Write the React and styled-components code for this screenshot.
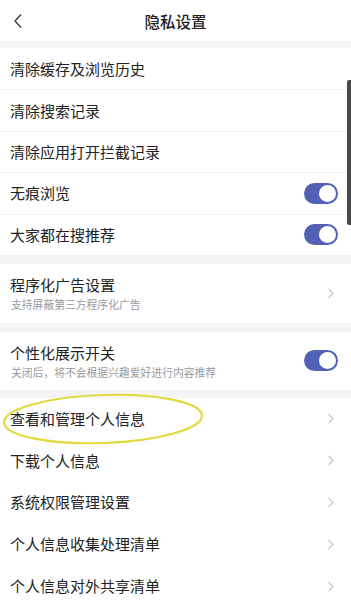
import React from "react";
import styled, { createGlobalStyle } from "styled-components";

const GlobalStyle = createGlobalStyle`
	html, body {
		margin: 0;
		padding: 0;
		background: #f4f4f6;
		font-family: "Noto Sans CJK SC", "Noto Sans", sans-serif;
	}
`;

const Page = styled.div`
	position: relative;
	width: 351px;
	height: 600px;
	overflow: hidden;
	background: #f4f4f6;
`;

const Header = styled.div`
	height: 41px;
	display: flex;
	align-items: center;
	justify-content: center;
	position: relative;
	background: #fff;
	margin-bottom: 7px;
`;

const Back = styled.div`
	position: absolute;
	left: 12px;
	top: 13px;
	width: 12px;
	height: 16px;
	display: flex;
`;

const Title = styled.div`
	font-size: 15.5px;
	font-weight: 500;
	color: #222;
`;

const Group = styled.div`
	background: #fff;
	margin-bottom: ${(p) => p.gap || 9}px;
`;

const Row = styled.div`
	height: ${(p) => p.h || 41.4}px;
	display: flex;
	align-items: center;
	padding: 0 12px 0 10px;
	border-top: ${(p) => (p.line ? "1px solid #f0f0f2" : "none")};
	box-sizing: border-box;
`;

const Texts = styled.div`
	flex: 1;
	display: flex;
	flex-direction: column;
	gap: 2px;
`;

const Label = styled.div`
	font-size: 15px;
	color: #222;
	line-height: 20px;
`;

const Sub = styled.div`
	font-size: 10.8px;
	color: #9a9a9e;
	line-height: 14px;
	padding-left: 1px;
`;

const Switch = styled.div`
	width: 34px;
	height: 21px;
	border-radius: 11px;
	background: #5261b5;
	position: relative;
	margin-right: 1px;
	&::after {
		content: "";
		position: absolute;
		right: 2px;
		top: 2px;
		width: 17px;
		height: 17px;
		border-radius: 50%;
		background: #fff;
	}
`;

const Chevron = () => (
	<svg width="8" height="11" viewBox="0 0 8 11" style={{ marginRight: 4 }}>
		<path d="M1.5 1 L6 5.5 L1.5 10" fill="none" stroke="#c4c4c8" strokeWidth="1.1" />
	</svg>
);

const Scrollbar = styled.div`
	position: absolute;
	right: 0;
	top: 80px;
	width: 4px;
	height: 145px;
	border-radius: 2px 0 0 2px;
	background: #4a4a4e;
`;

const Mark = styled.svg`
	position: absolute;
	left: 0;
	top: 392px;
	pointer-events: none;
`;

function App() {
	return (
		<Page>
			<GlobalStyle />
			<Header>
				<Back>
					<svg width="12" height="16" viewBox="0 0 12 16">
						<path d="M9 1.5 L3 8 L9 14.5" fill="none" stroke="#333" strokeWidth="1.3" />
					</svg>
				</Back>
				<Title>隐私设置</Title>
			</Header>
			<Group>
				<Row>
					<Label>清除缓存及浏览历史</Label>
				</Row>
				<Row line>
					<Label>清除搜索记录</Label>
				</Row>
				<Row line>
					<Label>清除应用打开拦截记录</Label>
				</Row>
				<Row line>
					<Texts>
						<Label>无痕浏览</Label>
					</Texts>
					<Switch />
				</Row>
				<Row line>
					<Texts>
						<Label>大家都在搜推荐</Label>
					</Texts>
					<Switch />
				</Row>
			</Group>
			<Group gap={9}>
				<Row h={59}>
					<Texts>
						<Label>程序化广告设置</Label>
						<Sub>支持屏蔽第三方程序化广告</Sub>
					</Texts>
					<Chevron />
				</Row>
			</Group>
			<Group gap={8}>
				<Row h={58}>
					<Texts>
						<Label>个性化展示开关</Label>
						<Sub>关闭后，将不会根据兴趣爱好进行内容推荐</Sub>
					</Texts>
					<Switch />
				</Row>
			</Group>
			<Group>
				<Row h={41.8}>
					<Texts>
						<Label>查看和管理个人信息</Label>
					</Texts>
					<Chevron />
				</Row>
				<Row h={41.8}>
					<Texts>
						<Label>下载个人信息</Label>
					</Texts>
					<Chevron />
				</Row>
				<Row h={41.8}>
					<Texts>
						<Label>系统权限管理设置</Label>
					</Texts>
					<Chevron />
				</Row>
				<Row h={41.8}>
					<Texts>
						<Label>个人信息收集处理清单</Label>
					</Texts>
					<Chevron />
				</Row>
				<Row h={41.8}>
					<Texts>
						<Label>个人信息对外共享清单</Label>
					</Texts>
					<Chevron />
				</Row>
			</Group>
			<Scrollbar />
			<Mark width="210" height="56" viewBox="0 0 210 56">
				<ellipse
					cx="103"
					cy="27"
					rx="99"
					ry="24"
					fill="none"
					stroke="#e0d93a"
					strokeWidth="2.2"
					transform="rotate(-2 103 27)"
				/>
			</Mark>
		</Page>
	);
}

export default App;
